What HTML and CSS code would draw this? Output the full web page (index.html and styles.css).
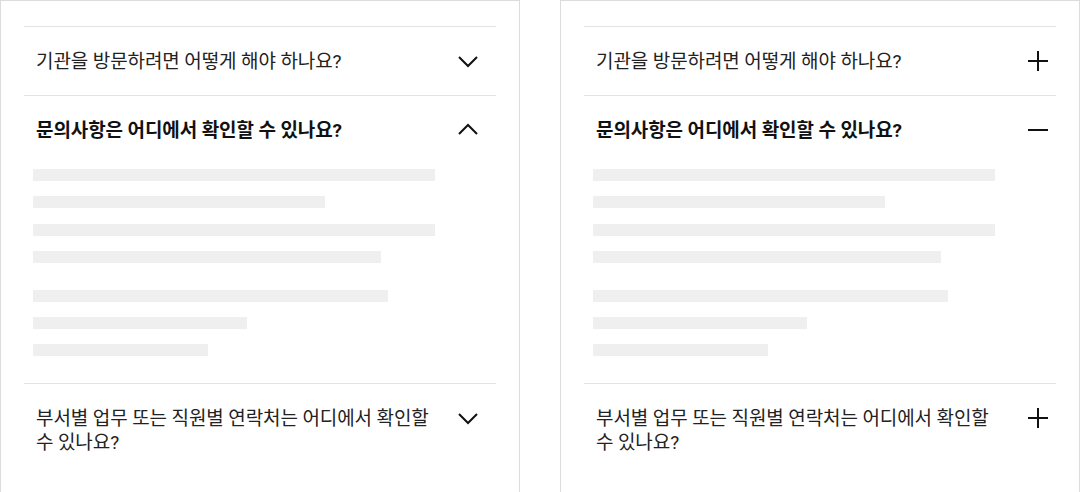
FILE: index.html
```html
<!DOCTYPE html>
<html lang="ko">
<head>
<meta charset="utf-8">
<title>FAQ</title>
<link rel="stylesheet" href="styles.css">
</head>
<body>
<div class="page">
  <section class="panel">
    <div class="item">
      <div class="head">
        <span class="q">기관을 방문하려면 어떻게 해야 하나요?</span>
        <svg class="ico" viewBox="0 0 24 24"><path d="M3 8 L12 17 L21 8"/></svg>
      </div>
    </div>
    <div class="item open">
      <div class="head">
        <span class="q">문의사항은 어디에서 확인할 수 있나요?</span>
        <svg class="ico" viewBox="0 0 24 24"><path d="M3 16 L12 7 L21 16"/></svg>
      </div>
      <div class="body">
        <div class="para">
          <div class="bar" style="width:402px"></div>
          <div class="bar" style="width:292px"></div>
          <div class="bar" style="width:402px"></div>
          <div class="bar" style="width:348px"></div>
        </div>
        <div class="para">
          <div class="bar" style="width:355px"></div>
          <div class="bar" style="width:214px"></div>
          <div class="bar" style="width:175px"></div>
        </div>
      </div>
    </div>
    <div class="item">
      <div class="head">
        <span class="q">부서별 업무 또는 직원별 연락처는 어디에서 확인할 수 있나요?</span>
        <svg class="ico" viewBox="0 0 24 24"><path d="M3 8 L12 17 L21 8"/></svg>
      </div>
    </div>
  </section>

  <section class="panel panel-plus">
    <div class="item">
      <div class="head">
        <span class="q">기관을 방문하려면 어떻게 해야 하나요?</span>
        <svg class="ico" viewBox="0 0 24 24"><path d="M12 2 V22 M2 12 H22"/></svg>
      </div>
    </div>
    <div class="item open">
      <div class="head">
        <span class="q">문의사항은 어디에서 확인할 수 있나요?</span>
        <svg class="ico" viewBox="0 0 24 24"><path d="M2 12 H22"/></svg>
      </div>
      <div class="body">
        <div class="para">
          <div class="bar" style="width:402px"></div>
          <div class="bar" style="width:292px"></div>
          <div class="bar" style="width:402px"></div>
          <div class="bar" style="width:348px"></div>
        </div>
        <div class="para">
          <div class="bar" style="width:355px"></div>
          <div class="bar" style="width:214px"></div>
          <div class="bar" style="width:175px"></div>
        </div>
      </div>
    </div>
    <div class="item">
      <div class="head">
        <span class="q">부서별 업무 또는 직원별 연락처는 어디에서 확인할 수 있나요?</span>
        <svg class="ico" viewBox="0 0 24 24"><path d="M12 2 V22 M2 12 H22"/></svg>
      </div>
    </div>
  </section>
</div>
</body>
</html>
```
FILE: styles.css
```css
* { box-sizing: border-box; }
html, body { margin: 0; padding: 0; background: #fff; }
body {
  font-family: Roboto, "Noto Sans CJK KR", sans-serif;
  color: #222;
  overflow: hidden;
}
.page {
  display: flex;
  gap: 40px;
  height: 492px;
  overflow: hidden;
}
.panel {
  width: 520px;
  height: 600px;
  border: 1px solid #dcdcdc;
  border-bottom: none;
  padding: 25px 23px 0;
}
.item {
  border-top: 1px solid #e3e3e3;
}
.head {
  display: flex;
  align-items: flex-start;
  gap: 16px;
  padding: 22px 16px 22px 12px;
}
.q {
  flex: 1;
  font-size: 19px;
  line-height: 24px;
  letter-spacing: -0.1px;
  color: #222;
  padding-top: 1px;
  margin-bottom: -1px;
}
.open .q {
  font-weight: 700;
  color: #111;
}
.ico {
  flex: none;
  width: 24px;
  height: 24px;
  fill: none;
  stroke: #111;
  stroke-width: 2;
}
.panel-plus .head {
  padding-right: 6.5px;
  gap: 26px;
}
.body {
  display: flex;
  flex-direction: column;
  gap: 27px;
  padding: 5px 0 27px 9px;
}
.para {
  display: flex;
  flex-direction: column;
  gap: 15.3px;
}
.bar {
  height: 12px;
  background: #efefef;
}
```
